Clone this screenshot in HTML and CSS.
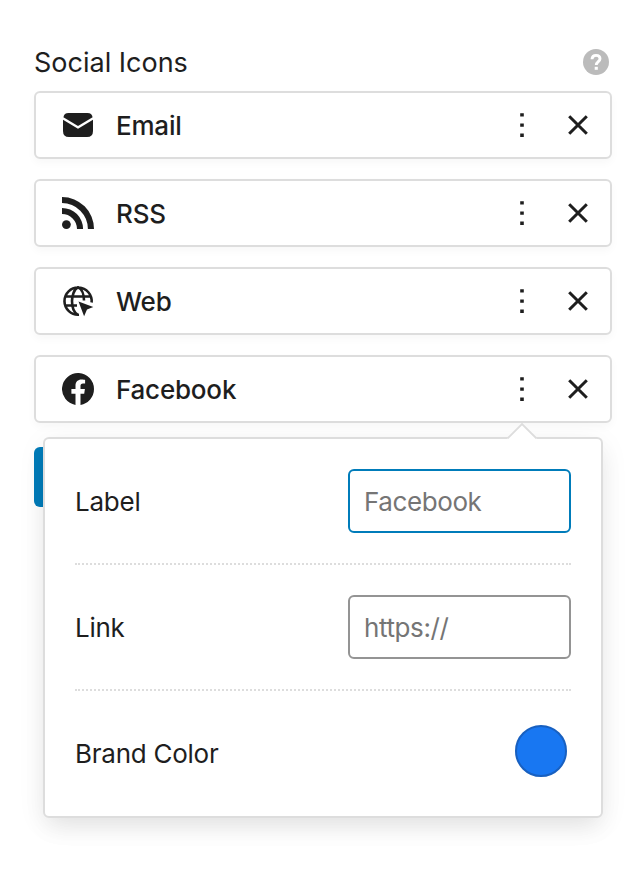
FILE: index.html
```html
<!DOCTYPE html>
<html lang="en">
<head>
<meta charset="utf-8">
<title>Social Icons</title>
<link rel="stylesheet" href="styles.css">
</head>
<body>
<svg width="0" height="0" class="defs">
  <symbol id="dots" viewBox="0 0 4 24"><path d="M.2 .2h3.600v3.400H.2zM.2 10.400h3.600v3.400H.2zM.2 20.600h3.600V24H.2z"/></symbol>
  <symbol id="close" viewBox="0 0 20 20"><path d="M1.200 1.200l17.600 17.600M18.800 1.200L1.200 18.800" fill="none" stroke="currentColor" stroke-width="3"/></symbol>
</svg>
<main class="panel">
  <header class="heading">
    <h1 class="title">Social Icons</h1>
    <svg class="help" viewBox="0 0 20 20"><circle cx="10" cy="10" r="10"/><path d="M6.900 7.900C7 5.900 8.200 4.900 10 4.900c1.900 0 3.100 1 3.100 2.600 0 2.200-2.900 2.300-2.900 4.900" fill="none" stroke="#fff" stroke-width="2.200"/><path d="M9 13.700h2.400v2.300H9z" fill="#fff"/></svg>
  </header>
  <ul class="items">
    <li class="item">
      <svg class="icon" viewBox="0 0 32 32"><path d="M1.400 8.300Q2 4 6.500 4h19Q30 4 30.600 8.300L16 17z"/><path d="M1 10.800l15 9 15-9V22Q31 28 25 28H7Q1 28 1 22z"/></svg>
      <span class="name">Email</span>
      <svg class="dots"><use href="#dots"/></svg><svg class="close"><use href="#close"/></svg>
    </li>
    <li class="item">
      <svg class="icon" viewBox="0 0 32 32"><circle cx="4.400" cy="27.600" r="4.400"/><path d="M0 0a32 32 0 0 1 32 32h-6.100A25.900 25.900 0 0 0 0 6.100zM0 10.900A21.100 21.100 0 0 1 21.100 32H15A15 15 0 0 0 0 17z"/></svg>
      <span class="name">RSS</span>
      <svg class="dots"><use href="#dots"/></svg><svg class="close"><use href="#close"/></svg>
    </li>
    <li class="item">
      <svg class="icon" viewBox="0 0 32 32"><g fill="none" stroke="currentColor" stroke-width="2.600"><path d="M17 29.700A13.600 13.600 0 1 1 29.600 17.500M3.300 11.500h25.400M3.300 20.500H15M15.500 29.600C11.500 27 10 21 10 16S12 4 16 2.300C20 4 22 10 22 15.500"/></g><path d="M16.500 16.500l14.800 5.400-6.300 2.700L22.100 31.300z"/></svg>
      <span class="name">Web</span>
      <svg class="dots"><use href="#dots"/></svg><svg class="close"><use href="#close"/></svg>
    </li>
    <li class="item">
      <svg class="icon" viewBox="0 0 32 32"><path d="M32 16.100A16 16 0 1 0 13.500 31.900V20.700H9.400v-4.600h4.100v-3.500c0-4 2.400-6.200 6-6.200 1.800 0 3.600.3 3.600.3v3.900h-2c-2 0-2.600 1.200-2.600 2.500v3h4.400l-.7 4.600h-3.700v11.200A16 16 0 0 0 32 16.100z"/></svg>
      <span class="name">Facebook</span>
      <svg class="dots"><use href="#dots"/></svg><svg class="close"><use href="#close"/></svg>
    </li>
  </ul>
  <div class="footer">
    <button class="add" type="button" aria-label="Add"></button>
    <section class="popover">
      <svg class="arrow" viewBox="0 0 32 16"><path d="M1 16L16 1l15 15z" fill="#fff"/><path d="M1.500 15.500L16 1l14.500 14.500" fill="none" stroke="#ddd" stroke-width="1.800"/></svg>
      <div class="field"><label class="label" for="label">Label</label><input class="input active" id="label" placeholder="Facebook"></div>
      <div class="field"><label class="label" for="link">Link</label><input class="input" id="link" placeholder="https://"></div>
      <div class="field"><span class="label">Brand Color</span><button class="swatch" type="button" aria-label="Brand Color"></button></div>
    </section>
  </div>
</main>
</body>
</html>
```

FILE: styles.css
```css
* { box-sizing: border-box; }
body {
  margin: 0;
  height: 894px;
  overflow: hidden;
  background: #fff;
  color: #1e1e1e;
  font: 400 26px/32px Inter, "Liberation Sans", sans-serif;
}
.defs { display: block; }
.panel { padding: 46px 26px 0 34px; }
.heading {
  display: flex;
  align-items: center;
  justify-content: space-between;
  height: 32px;
  padding-right: 3px;
}
.title { margin: 0; padding-top: 1px; font: inherit; font-size: 27px; }
.help { width: 26px; height: 26px; fill: #bbb; }
.items {
  display: flex;
  flex-direction: column;
  gap: 20px;
  margin: 13px 0 0;
  padding: 0;
  list-style: none;
}
.item {
  display: flex;
  align-items: center;
  height: 68px;
  padding: 0 22px 0 26px;
  border: 2px solid #ddd;
  border-radius: 6px;
  background: #fff;
  box-shadow: 0 4px 8px rgba(0, 0, 0, .03);
}
.icon { width: 32px; height: 32px; fill: currentColor; }
.name { flex: 1; margin-left: 22px; padding-top: 2px; font-weight: 500; letter-spacing: -.2px; }
.dots { width: 4px; height: 24px; margin-right: 44px; fill: currentColor; }
.close { width: 20px; height: 20px; }
.footer { position: relative; margin-top: 24px; }
.add {
  display: block;
  width: 160px;
  height: 60px;
  border: 0;
  border-radius: 6px;
  background: #007cba;
}
.popover {
  position: absolute;
  top: -10px;
  left: 9px;
  width: 560px;
  height: 381px;
  padding: 0 30px;
  border: 2px solid #ddd;
  border-radius: 6px;
  background: #fff;
  box-shadow: 0 6px 30px rgba(0, 0, 0, .06), 0 12px 24px -4px rgba(0, 0, 0, .08);
}
.arrow { position: absolute; top: -16px; left: 461px; width: 32px; height: 16px; }
.field {
  display: flex;
  align-items: center;
  justify-content: space-between;
  height: 126px;
  border-bottom: 2px dotted #ddd;
}
.field:last-child { border: 0; padding: 0 4px 6px 0; }
.label { padding-top: 2px; letter-spacing: -.25px; }
.field:last-child .label { padding-top: 6px; }
.input {
  width: 223px;
  height: 64px;
  padding: 0 14px;
  border: 2px solid #949494;
  border-radius: 6px;
  outline: 0;
  background: #fff;
  font: inherit;
  letter-spacing: -.4px;
}
.input::placeholder { color: #757575; opacity: 1; }
.active { border-color: #007cba; }
.swatch {
  width: 52px;
  height: 52px;
  padding: 0;
  border: 2px solid #1860c0;
  border-radius: 50%;
  background: #1877f2;
}
```
